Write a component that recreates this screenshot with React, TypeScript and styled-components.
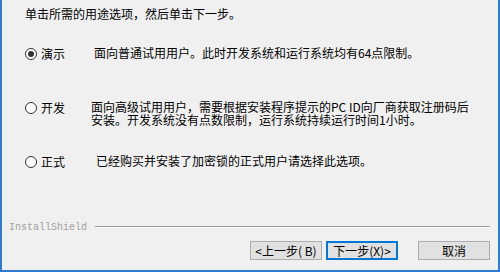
import React from "react";
import styled, { createGlobalStyle } from "styled-components";

const Global = createGlobalStyle`
  html, body { margin: 0; padding: 0; background: #f0f0f0; }
  * { box-sizing: border-box; }
`;

const cjk = `"Noto Sans CJK SC", "Noto Sans CJK TC", sans-serif`;

const Page = styled.div`
  width: 500px;
  height: 272px;
  background: #f0f0f0;
  border-left: 2px solid #2f7bd0;
  border-right: 2px solid #2f7bd0;
  border-bottom: 2px solid #2f7bd0;
  display: flex;
  flex-direction: column;
  font-family: ${cjk};
  font-size: 12px;
  line-height: 13px;
  color: #000;
`;

const Header = styled.div`
  padding: 7px 0 0 23px;
  height: 20px;
`;

const Options = styled.div`
  margin-top: 27px;
  display: grid;
  grid-auto-rows: 54px;
  padding-left: 23px;
`;

const Option = styled.div`
  display: flex;
  align-items: flex-start;
`;

const Choice = styled.label`
  display: flex;
  align-items: center;
  gap: 4px;
  width: 60px;
  height: 13px;
  flex: none;
`;

const Radio = styled.span<{ $checked?: boolean }>`
  width: 12px;
  height: 12px;
  border-radius: 50%;
  border: 1px solid #333;
  background: #fff;
  display: flex;
  align-items: center;
  justify-content: center;
  flex: none;
  &::after {
    content: "";
    width: 6px;
    height: 6px;
    border-radius: 50%;
    background: ${(p) => (p.$checked ? "#333" : "transparent")};
  }
`;

const Desc = styled.div<{ $indent: number }>`
  margin-left: ${(p) => p.$indent}px;
  white-space: pre-line;
  line-height: 12.5px;
`;

const Footer = styled.div`
  margin-top: auto;
  display: flex;
  flex-direction: column;
  padding: 0 8px 10px 7px;
`;

const Brand = styled.div`
  display: flex;
  align-items: center;
  gap: 8px;
  height: 12px;
`;

const BrandText = styled.span`
  font-family: "Liberation Mono", "DejaVu Sans Mono", monospace;
  font-size: 10px;
  color: #a0a0a0;
`;

const Rule = styled.div`
  flex: 1;
  height: 2px;
  margin-top: -1px;
  border-top: 1px solid #a0a0a0;
  border-bottom: 1px solid #ffffff;
`;

const Buttons = styled.div`
  margin-top: 8px;
  display: flex;
  justify-content: flex-end;
  gap: 4px;
`;

const Button = styled.button<{ $default?: boolean; $gapLeft?: number }>`
  width: 72px;
  height: 19px;
  margin-left: ${(p) => p.$gapLeft ?? 0}px;
  padding: 0;
  background: #e1e1e1;
  border: ${(p) => (p.$default ? "2px solid #0078d7" : "1px solid #adadad")};
  font-family: ${cjk};
  font-size: 12px;
  line-height: 13px;
  color: #000;
  display: flex;
  align-items: center;
  justify-content: center;
`;

export default function App() {
  return (
    <>
      <Global />
      <Page>
        <Header>单击所需的用途选项，然后单击下一步。</Header>
        <Options>
          <Option>
            <Choice>
              <Radio $checked />
              演示
            </Choice>
            <Desc $indent={9}>面向普通试用用户。此时开发系统和运行系统均有64点限制。</Desc>
          </Option>
          <Option>
            <Choice>
              <Radio />
              开发
            </Choice>
            <Desc $indent={6}>
              {"面向高级试用用户，需要根据安装程序提示的PC ID向厂商获取注册码后\n安装。开发系统没有点数限制，运行系统持续运行时间1小时。"}
            </Desc>
          </Option>
          <Option>
            <Choice>
              <Radio />
              正式
            </Choice>
            <Desc $indent={11}>已经购买并安装了加密锁的正式用户请选择此选项。</Desc>
          </Option>
        </Options>
        <Footer>
          <Brand>
            <BrandText>InstallShield</BrandText>
            <Rule />
          </Brand>
          <Buttons>
            <Button>&lt;上一步( B)</Button>
            <Button $default>下一步(X)&gt;</Button>
            <Button $gapLeft={16}>取消</Button>
          </Buttons>
        </Footer>
      </Page>
    </>
  );
}
